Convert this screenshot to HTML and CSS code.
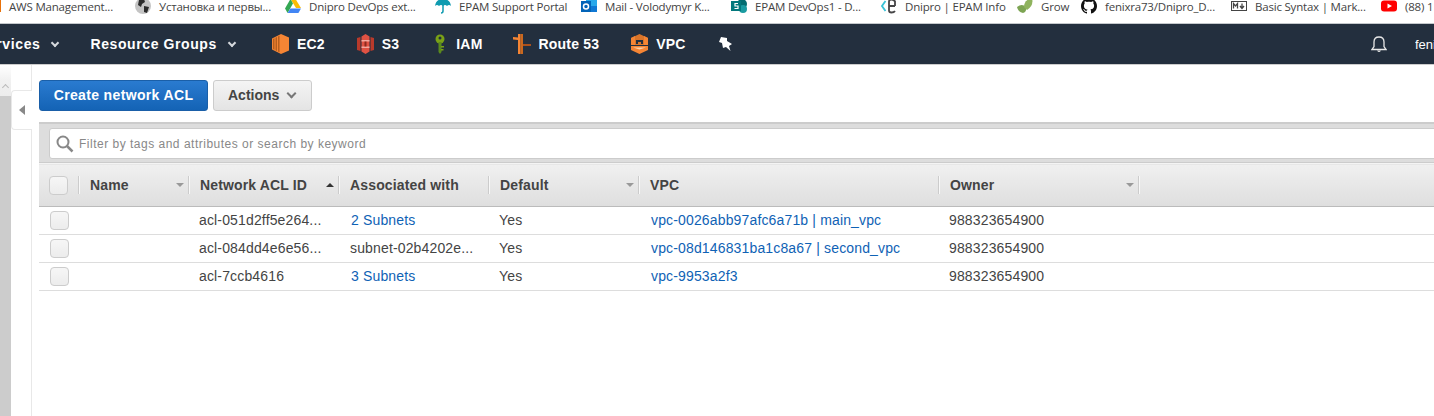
FILE: index.html
```html
<!DOCTYPE html>
<html lang="en">
<head>
    <meta charset="UTF-8">
    <meta name="viewport" content="width=device-width, initial-scale=1.0">
    <title>Network ACLs</title>
    <link rel="stylesheet" href="styles.css">
</head>
<body>
    <div class="bookmarks">
        <a class="bm">
            <svg viewBox="0 0 16 16"><rect x="0" y="2" width="16" height="12" fill="#e8710a"/></svg>
            <span>AWS Management...</span>
        </a>
        <a class="bm">
            <svg viewBox="0 0 16 16"><circle cx="8" cy="8" r="8" fill="#c4c4c4"/><path d="M4 2l5-1 1 3-3 2-1 3-3-2zM9 8l5 1-2 6-3-1z" fill="#2b2b2b"/></svg>
            <span>Установка и первы...</span>
        </a>
        <a class="bm">
            <svg viewBox="0 0 16 16"><path d="M5.500 1h5L16 10h-5z" fill="#fbbc04"/><path d="M5.500 1L0 10.500 2.600 15 8 5.500z" fill="#34a853"/><path d="M2.600 15h10.800L16 10.500H5.400z" fill="#4285f4"/></svg>
            <span>Dnipro DevOps ext...</span>
        </a>
        <a class="bm bm-short">
            <svg viewBox="0 0 16 16"><path d="M0 8Q1 1 8 1t8 7q-2-2-4 0-2-2-4 0-2-2-4 0-2-2-4 0z" fill="#0f9bb0"/><path d="M8 7v6q0 2-2 2" fill="none" stroke="#0f9bb0" stroke-width="1.500"/></svg>
            <span>EPAM Support Portal</span>
        </a>
        <a class="bm">
            <svg viewBox="0 0 16 16"><rect x="5" y="2" width="11" height="12" fill="#28a8ea"/><rect x="5" y="8" width="11" height="6" fill="#0f78d4"/><rect x="0" y="3" width="10" height="11" fill="#0364b8"/><circle cx="5" cy="8.500" r="2.500" fill="none" stroke="#fff" stroke-width="1.500"/></svg>
            <span>Mail - Volodymyr K...</span>
        </a>
        <a class="bm">
            <svg viewBox="0 0 16 16"><circle cx="11" cy="6" r="5" fill="#036c70"/><circle cx="12" cy="11" r="4" fill="#1a9ba1"/><rect x="0" y="3" width="10" height="10" fill="#03787c"/><path d="M7 5.500H4v2.500h3v2.500H3.500" fill="none" stroke="#fff" stroke-width="1.200"/></svg>
            <span>EPAM DevOps1 - D...</span>
        </a>
        <a class="bm bm-mid">
            <svg viewBox="0 0 16 16"><path d="M4.500 3L1 8l3.500 5" fill="none" stroke="#39c2d7" stroke-width="1.800"/><path d="M14 8H8V3.500Q8 1.500 10.500 1.500T14 3.500V8M8 8v4.500q0 2 2.500 2t3.500-1.500" fill="none" stroke="#464547" stroke-width="1.800"/></svg>
            <span>Dnipro | EPAM Info</span>
        </a>
        <a class="bm bm-tiny">
            <svg viewBox="0 0 16 16"><path d="M0 9Q5 5 9 9q1 5-3 6Q1 14 0 9z" fill="#7da453"/><path d="M7 9q0-7 8-9 2 8-5 12z" fill="#8fb35e"/></svg>
            <span>Grow</span>
        </a>
        <a class="bm">
            <svg viewBox="0 0 16 16"><path d="M8 0C3.600 0 0 3.600 0 8c0 3.500 2.300 6.500 5.500 7.600.4.100.5-.2.500-.4v-1.400c-2.200.5-2.700-1-2.700-1-.4-.9-.9-1.200-.9-1.200-.7-.5.100-.5.100-.5.800.100 1.200.8 1.200.8.700 1.200 1.900.9 2.300.7.100-.5.300-.9.500-1.100-1.800-.2-3.600-.9-3.600-4 0-.9.300-1.600.8-2.100-.1-.2-.4-1 .1-2.100 0 0 .7-.2 2.200.8.600-.2 1.300-.3 2-.3s1.400.1 2 .3c1.500-1 2.200-.8 2.200-.8.400 1.100.2 1.900.1 2.100.5.600.8 1.300.8 2.100 0 3.100-1.900 3.700-3.700 3.900.3.300.6.800.6 1.500v2.200c0 .2.100.5.600.4C13.700 14.500 16 11.500 16 8c0-4.400-3.600-8-8-8z" fill="#111"/></svg>
            <span>fenixra73/Dnipro_D...</span>
        </a>
        <a class="bm">
            <svg viewBox="0 0 16 16"><rect x=".5" y="3.500" width="15" height="9" fill="#fff" stroke="#444"/><path d="M2.500 10.500v-5l2 2.500 2-2.500v5M11 5.500v4M9 8l2 2.500L13 8" fill="none" stroke="#444" stroke-width="1.300"/></svg>
            <span>Basic Syntax | Mark...</span>
        </a>
        <a class="bm">
            <svg viewBox="0 0 16 16"><rect x="0" y="2.500" width="16" height="11" rx="3" fill="#f00"/><path d="M6.500 5.500v5L11 8z" fill="#fff"/></svg>
            <span>(88) 1</span>
        </a>
    </div>

    <nav class="topnav">
        <div class="nav-left">
            <a class="nav-menu nav-services">Services <i class="chev"></i></a>
            <a class="nav-menu">Resource Groups <i class="chev"></i></a>
            <a class="nav-svc nav-ec2">
                <svg viewBox="0 0 17 20"><path d="M0 4.500L9 0l8 3.500v13L9 20 0 15.500z" fill="#f58534"/><path d="M1 5v10l1.500.8V4.300zM3.500 3.800v12.400l1.500.8V3zM6 2.500v15l1.500.8V1.700z" fill="#b85f1c"/></svg>
                EC2
            </a>
            <a class="nav-svc nav-s3">
                <svg viewBox="0 0 17 20"><path d="M0 4l3.500-1v14L0 16zM17 4l-3.500-1v14l3.500-1z" fill="#b93a2b"/><path d="M4.500 2.500L8.500 0l4 2.500v15l-4 2.500-4-2.500z" fill="#e05243"/><path d="M4.500 6h8v1.500h-8zM4.500 12.500h8V14h-8z" fill="#f3a79d"/><path d="M7.500 7.500h2v5h-2z" fill="#8c2a1e"/></svg>
                S3
            </a>
            <a class="nav-svc nav-iam">
                <svg viewBox="0 0 14 20"><circle cx="7" cy="5" r="4.500" fill="#7aa116"/><circle cx="7" cy="4" r="1.500" fill="#232f3e"/><path d="M5.500 8h3v10L7 20l-1.500-2z" fill="#5a8a1c"/><path d="M8 12h3v1.500H8zM8 15h2.500v1.500H8z" fill="#7aa116"/></svg>
                IAM
            </a>
            <a class="nav-svc nav-r53">
                <svg viewBox="0 0 18 20"><path d="M0 3l5 .5v2.500L0 5.500z" fill="#f58534"/><path d="M10 10h8v2h-8z" fill="#a9501c"/><path d="M5 0h2.500v20H5z" fill="#f58534"/><path d="M7.500 0H10v20H7.500z" fill="#c9681f"/></svg>
                Route 53
            </a>
            <a class="nav-svc nav-vpc">
                <svg viewBox="0 0 17 20"><path d="M8.500 0L17 4v7H0V4z" fill="#d9752a"/><path d="M0 4l4-2v9H0zM17 4l-4-2v9h4z" fill="#f58534"/><path d="M5 10V6h7v4h-2V8H7v2z" fill="#232f3e"/><path d="M0 12h17v4l-8.500 4L0 16z" fill="#f58534"/><path d="M2 13.500h13l-6.500 2z" fill="#fbd3ac"/></svg>
                VPC
            </a>
            <svg class="nav-pin" viewBox="0 0 14 14"><path d="M2 0l6 1v3l5 3-3 2 1.500 5L7 10l-3 1-1-5-3-1z" fill="#fff"/></svg>
        </div>
        <div class="nav-right">
            <svg class="nav-bell" viewBox="0 0 16 18"><path d="M1 14.500h14l-2-3V7q0-5-5-5T3 7v4.500z" fill="none" stroke="#e8e8e8" stroke-width="1.300"/><path d="M6 15.500q2 3 4 0z" fill="#e8e8e8"/></svg>
            <span class="nav-user">fenixra73</span>
        </div>
    </nav>

    <div class="page">
        <div class="side">
            <div class="scroll">
                <div class="scroll-up"><i></i></div>
            </div>
            <div class="collapse"><i></i></div>
        </div>
        <main class="content">
            <div class="toolbar">
                <button type="button" class="btn-primary">Create network ACL</button>
                <button type="button" class="btn-actions">Actions <i class="caret"></i></button>
            </div>

            <div class="filterbar">
                <div class="search">
                    <svg viewBox="0 0 18 18"><circle cx="7" cy="7" r="5.500" fill="none" stroke="#888" stroke-width="2"/><path d="M11 11l5.500 5.500" stroke="#888" stroke-width="2.500"/></svg>
                    <span>Filter by tags and attributes or search by keyword</span>
                </div>
            </div>

            <table class="acl-table">
                <colgroup>
                    <col class="c-check"><col class="c-name"><col class="c-id"><col class="c-assoc"><col class="c-default"><col class="c-vpc"><col class="c-owner"><col>
                </colgroup>
                <thead>
                    <tr>
                        <th><span class="check"></span></th>
                        <th><div class="th-in">Name <i class="sort"></i></div></th>
                        <th><div class="th-in">Network ACL ID <i class="sort sort-up"></i></div></th>
                        <th><div class="th-in">Associated with</div></th>
                        <th><div class="th-in">Default <i class="sort"></i></div></th>
                        <th><div class="th-in">VPC</div></th>
                        <th><div class="th-in">Owner <i class="sort"></i></div></th>
                        <th><div class="th-in"></div></th>
                    </tr>
                </thead>
                <tbody>
                    <tr>
                        <td><span class="check"></span></td>
                        <td></td>
                        <td>acl-051d2ff5e264...</td>
                        <td><a class="link">2 Subnets</a></td>
                        <td>Yes</td>
                        <td><a class="link">vpc-0026abb97afc6a71b | main_vpc</a></td>
                        <td>988323654900</td>
                        <td></td>
                    </tr>
                    <tr>
                        <td><span class="check"></span></td>
                        <td></td>
                        <td>acl-084dd4e6e56...</td>
                        <td class="plain">subnet-02b4202e...</td>
                        <td>Yes</td>
                        <td><a class="link">vpc-08d146831ba1c8a67 | second_vpc</a></td>
                        <td>988323654900</td>
                        <td></td>
                    </tr>
                    <tr>
                        <td><span class="check"></span></td>
                        <td></td>
                        <td>acl-7ccb4616</td>
                        <td><a class="link">3 Subnets</a></td>
                        <td>Yes</td>
                        <td><a class="link">vpc-9953a2f3</a></td>
                        <td>988323654900</td>
                        <td></td>
                    </tr>
                </tbody>
            </table>
        </main>
    </div>
</body>
</html>
```

FILE: styles.css
```css
html, body {
    margin: 0;
    padding: 0;
    height: 100%;
    overflow: hidden;
    background-color: #fff;
}

body {
    font-family: "Liberation Sans", Arial, sans-serif;
    color: #444;
}

/* bookmarks bar */
.bookmarks {
    display: flex;
    height: 23px;
    margin-left: -15px;
    border-bottom: 1px solid #c4c8cc;
    background-color: #fff;
    white-space: nowrap;
    font-family: "Open Sans", sans-serif;
    font-size: 11.5px;
    letter-spacing: -0.2px;
    color: #444;
}

.bm {
    display: flex;
    flex: none;
    align-items: center;
    gap: 8px;
    width: 150px;
    height: 12px;
}

.bm svg {
    flex: none;
    width: 16px;
    height: 16px;
}

.bm-short {
    width: 146px;
}

.bm-mid {
    width: 136px;
}

.bm-tiny {
    width: 64px;
}

/* top nav */
.topnav {
    display: flex;
    justify-content: space-between;
    align-items: center;
    height: 40px;
    border-bottom: 1px solid #ccc;
    background-color: #232f3e;
    color: #fff;
    font-size: 14px;
    font-weight: bold;
    letter-spacing: 0.6px;
    white-space: nowrap;
}

.nav-left,
.nav-right {
    display: flex;
    align-items: center;
}

.nav-menu {
    display: flex;
    align-items: center;
}

.nav-services {
    margin-left: -22px;
    margin-right: 32px;
}

.chev {
    width: 4px;
    height: 4px;
    margin: -3px 0 0 12px;
    border-right: 2px solid #d5d9dd;
    border-bottom: 2px solid #d5d9dd;
    transform: rotate(45deg);
}

.nav-svc {
    display: flex;
    align-items: center;
    gap: 8px;
    letter-spacing: 0.2px;
}

.nav-svc svg {
    width: 17px;
    height: 20px;
}

.nav-ec2 {
    margin-left: 37px;
}

.nav-s3 {
    margin-left: 32px;
}

.nav-iam {
    gap: 9px;
    margin-left: 34px;
}

.nav-iam svg {
    width: 14px;
}

.nav-r53 {
    margin-left: 30px;
}

.nav-r53 svg {
    width: 18px;
}

.nav-vpc {
    margin-left: 32px;
}

.nav-pin {
    width: 14px;
    height: 14px;
    margin-left: 33px;
}

.nav-bell {
    width: 16px;
    height: 18px;
    margin-right: 1px;
}

.nav-user {
    width: 19px;
    margin-left: 27px;
    overflow: hidden;
    font-size: 13px;
    font-weight: normal;
    letter-spacing: 0;
}

/* left strip */
.page {
    display: flex;
    height: 351px;
}

.side {
    display: flex;
    flex: none;
    width: 31px;
    border-right: 1px solid #e8e8e8;
}

.scroll {
    flex: none;
    width: 11px;
    background-color: #ccc;
}

.scroll-up {
    display: flex;
    justify-content: center;
    height: 31px;
    background: linear-gradient(#fff 0, #f1f1f1 15px, #ececec 100%);
}

.scroll-up i {
    width: 4px;
    height: 4px;
    margin-top: 20px;
    border-top: 1px solid #bbb;
    border-left: 1px solid #bbb;
    transform: rotate(45deg);
}

.collapse {
    display: flex;
    align-items: center;
    justify-content: center;
    box-sizing: border-box;
    width: 21px;
    height: 40px;
    margin: 25px -1px 0 0;
    border: 1px solid #e8e8e8;
    border-right: none;
    border-radius: 4px 0 0 4px;
    background-color: #fff;
}

.collapse i {
    width: 0;
    height: 0;
    border-top: 5px solid transparent;
    border-bottom: 5px solid transparent;
    border-right: 6px solid #888;
}

.content {
    flex: 1;
    min-width: 0;
    padding-left: 7px;
}

/* toolbar */
.toolbar {
    display: flex;
    gap: 5px;
    height: 31px;
    padding: 15px 0 11px;
}

.toolbar button {
    box-sizing: border-box;
    height: 31px;
    padding: 0 0 2px;
    border-radius: 3px;
    font-family: inherit;
    font-size: 14px;
    font-weight: bold;
    letter-spacing: 0.35px;
}

.btn-primary {
    width: 169px;
    border: 1px solid #1a5fa8;
    background: linear-gradient(#2a7bd0, #1463b5);
    color: #fff;
}

.toolbar .btn-actions {
    width: 99px;
    padding-left: 14px;
    border: 1px solid #ccc;
    background: linear-gradient(#f4f4f4, #e4e4e4);
    color: #444;
    letter-spacing: 0;
    text-align: left;
}

.caret {
    display: inline-block;
    width: 5px;
    height: 5px;
    margin: 0 0 3px 5px;
    border-right: 2px solid #777;
    border-bottom: 2px solid #777;
    transform: rotate(45deg);
}

/* filter */
.filterbar {
    box-sizing: border-box;
    height: 41px;
    padding: 4px 0 0 10px;
    border-top: 2px solid #ccc;
    border-bottom: 1px solid #ccc;
    background-color: #ddd;
}

.search {
    display: flex;
    align-items: center;
    gap: 5px;
    box-sizing: border-box;
    height: 31px;
    margin-right: -4px;
    padding-left: 6px;
    border: 1px solid #ccc;
    border-radius: 3px;
    background-color: #fff;
    color: #888;
    font-size: 12px;
    letter-spacing: 0.5px;
}

.search svg {
    width: 18px;
    height: 18px;
}

/* table */
.acl-table {
    width: 100%;
    table-layout: fixed;
    border-collapse: collapse;
    border-top: 1px solid #f4f4f4;
    font-size: 14px;
    letter-spacing: 0.15px;
}

.c-check { width: 40px; }
.c-name { width: 110px; }
.c-id { width: 150px; }
.c-assoc { width: 150px; }
.c-default { width: 150px; }
.c-vpc { width: 300px; }
.c-owner { width: 200px; }

.acl-table th {
    height: 42px;
    padding: 0;
    border-bottom: 1px solid #bbb;
    background: linear-gradient(#f0f0f0, #dedede);
    color: #444;
    font-size: 14px;
    font-weight: bold;
    letter-spacing: 0.15px;
    text-align: left;
}

.th-in {
    display: flex;
    align-items: center;
    justify-content: space-between;
    box-sizing: border-box;
    height: 18px;
    margin-left: -1px;
    padding: 0 5px 0 11px;
    border-left: 1px solid #ccc;
    box-shadow: inset 1px 0 #f8f8f8;
}

.sort {
    width: 0;
    height: 0;
    border-left: 4px solid transparent;
    border-right: 4px solid transparent;
    border-top: 4px solid #999;
}

.sort-up {
    border-top: none;
    border-bottom: 4px solid #333;
}

.check {
    display: block;
    box-sizing: border-box;
    width: 19px;
    height: 19px;
    margin-left: 10px;
    border: 1px solid #ccc;
    border-radius: 4px;
    background: linear-gradient(#f6f6f6, #ececec);
}

.acl-table td {
    box-sizing: border-box;
    height: 28px;
    padding: 0 0 2px 10px;
    border-bottom: 1px solid #ddd;
    color: #444;
    white-space: nowrap;
}

.acl-table td:first-child {
    padding: 0 0 0 1px;
}

.link {
    margin-left: 2px;
    color: #0f62b5;
}

.acl-table td.plain {
    padding-left: 11px;
}
```
